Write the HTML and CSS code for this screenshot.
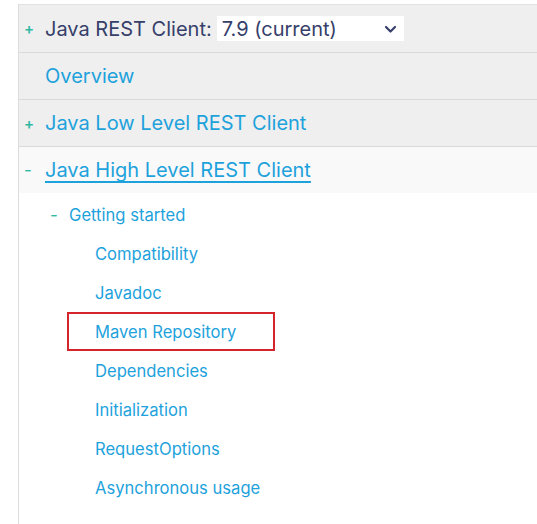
FILE: index.html
```html
<!DOCTYPE html>
<html>
<head>
<meta charset="utf-8">
<link rel="stylesheet" href="styles.css">
</head>
<body>
<nav class="toc">
  <div class="row head">
    <span class="mark">+</span>
    <span class="title">Java REST Client:</span>
    <div class="select">
      <span>7.9 (current)</span>
      <svg width="13" height="9" viewBox="0 0 13 9"><path d="M2 2 L6.5 6.5 L11 2" fill="none" stroke="#36406a" stroke-width="2.2" stroke-linecap="round" stroke-linejoin="round"/></svg>
    </div>
  </div>
  <div class="row"><span class="mark"></span><a class="link">Overview</a></div>
  <div class="row"><span class="mark">+</span><a class="link">Java Low Level REST Client</a></div>
  <div class="row open"><span class="mark minus">-</span><a class="link under">Java High Level REST Client</a></div>
  <div class="sub">
    <div class="subhead"><span class="mark minus">-</span><a class="link small">Getting started</a></div>
    <ul class="items">
      <li><a class="link small">Compatibility</a></li>
      <li><a class="link small">Javadoc</a></li>
      <li class="hl"><a class="link small">Maven Repository</a></li>
      <li><a class="link small">Dependencies</a></li>
      <li><a class="link small">Initialization</a></li>
      <li><a class="link small">RequestOptions</a></li>
      <li><a class="link small">Asynchronous usage</a></li>
    </ul>
  </div>
</nav>
</body>
</html>
```
FILE: styles.css
```css
html, body { margin: 0; padding: 0; background: #fff; }
body {
  padding: 4px 0 0 18px;
  font-family: Inter, "Noto Sans", sans-serif;
  height: 520px;
}
.toc {
  border-left: 1px solid #dcdcdc;
  border-top: 1px solid #e2e2e2;
  height: 100%;
}
.row {
  display: flex;
  align-items: center;
  height: 46px;
  background: #efefef;
  border-bottom: 1px solid #dadada;
  font-size: 20px;
}
.row.head { height: 47px; }
.row.open { background: #faf9fa; border-bottom: none; }
.mark {
  width: 26px;
  flex: none;
  text-align: left;
  padding-left: 5px;
  box-sizing: border-box;
  color: #2fb9a5;
  font-size: 15px;
  font-weight: 600;
}
.mark.minus { font-size: 17px; font-weight: 400; }
.title { color: #36406a; }
.select {
  margin-left: 5px;
  width: 187px;
  height: 25px;
  background: #fff;
  display: flex;
  align-items: center;
  justify-content: space-between;
  padding: 0 7px 0 5px;
  box-sizing: border-box;
  color: #36406a;
  font-size: 20px;
}
.select svg { margin-top: 1px; }
.link { color: #1ea2dc; text-decoration: none; }
.link.under { text-decoration: underline; text-decoration-thickness: 2px; text-underline-offset: 4px; }
.sub { padding-top: 2px; }
.subhead {
  display: flex;
  align-items: center;
  height: 39px;
  padding-left: 25px;
}
.subhead .mark { width: 25px; padding-left: 6px; }
.small { font-size: 16.6px; }
.items { list-style: none; margin: 0; padding: 0 0 0 76px; }
.items li {
  height: 39px;
  display: flex;
  align-items: center;
}
.items li.hl {
  margin-left: -28px;
  padding-left: 26px;
  width: 208px;
  box-sizing: border-box;
  border: 2px solid #d4252d;
}
```
